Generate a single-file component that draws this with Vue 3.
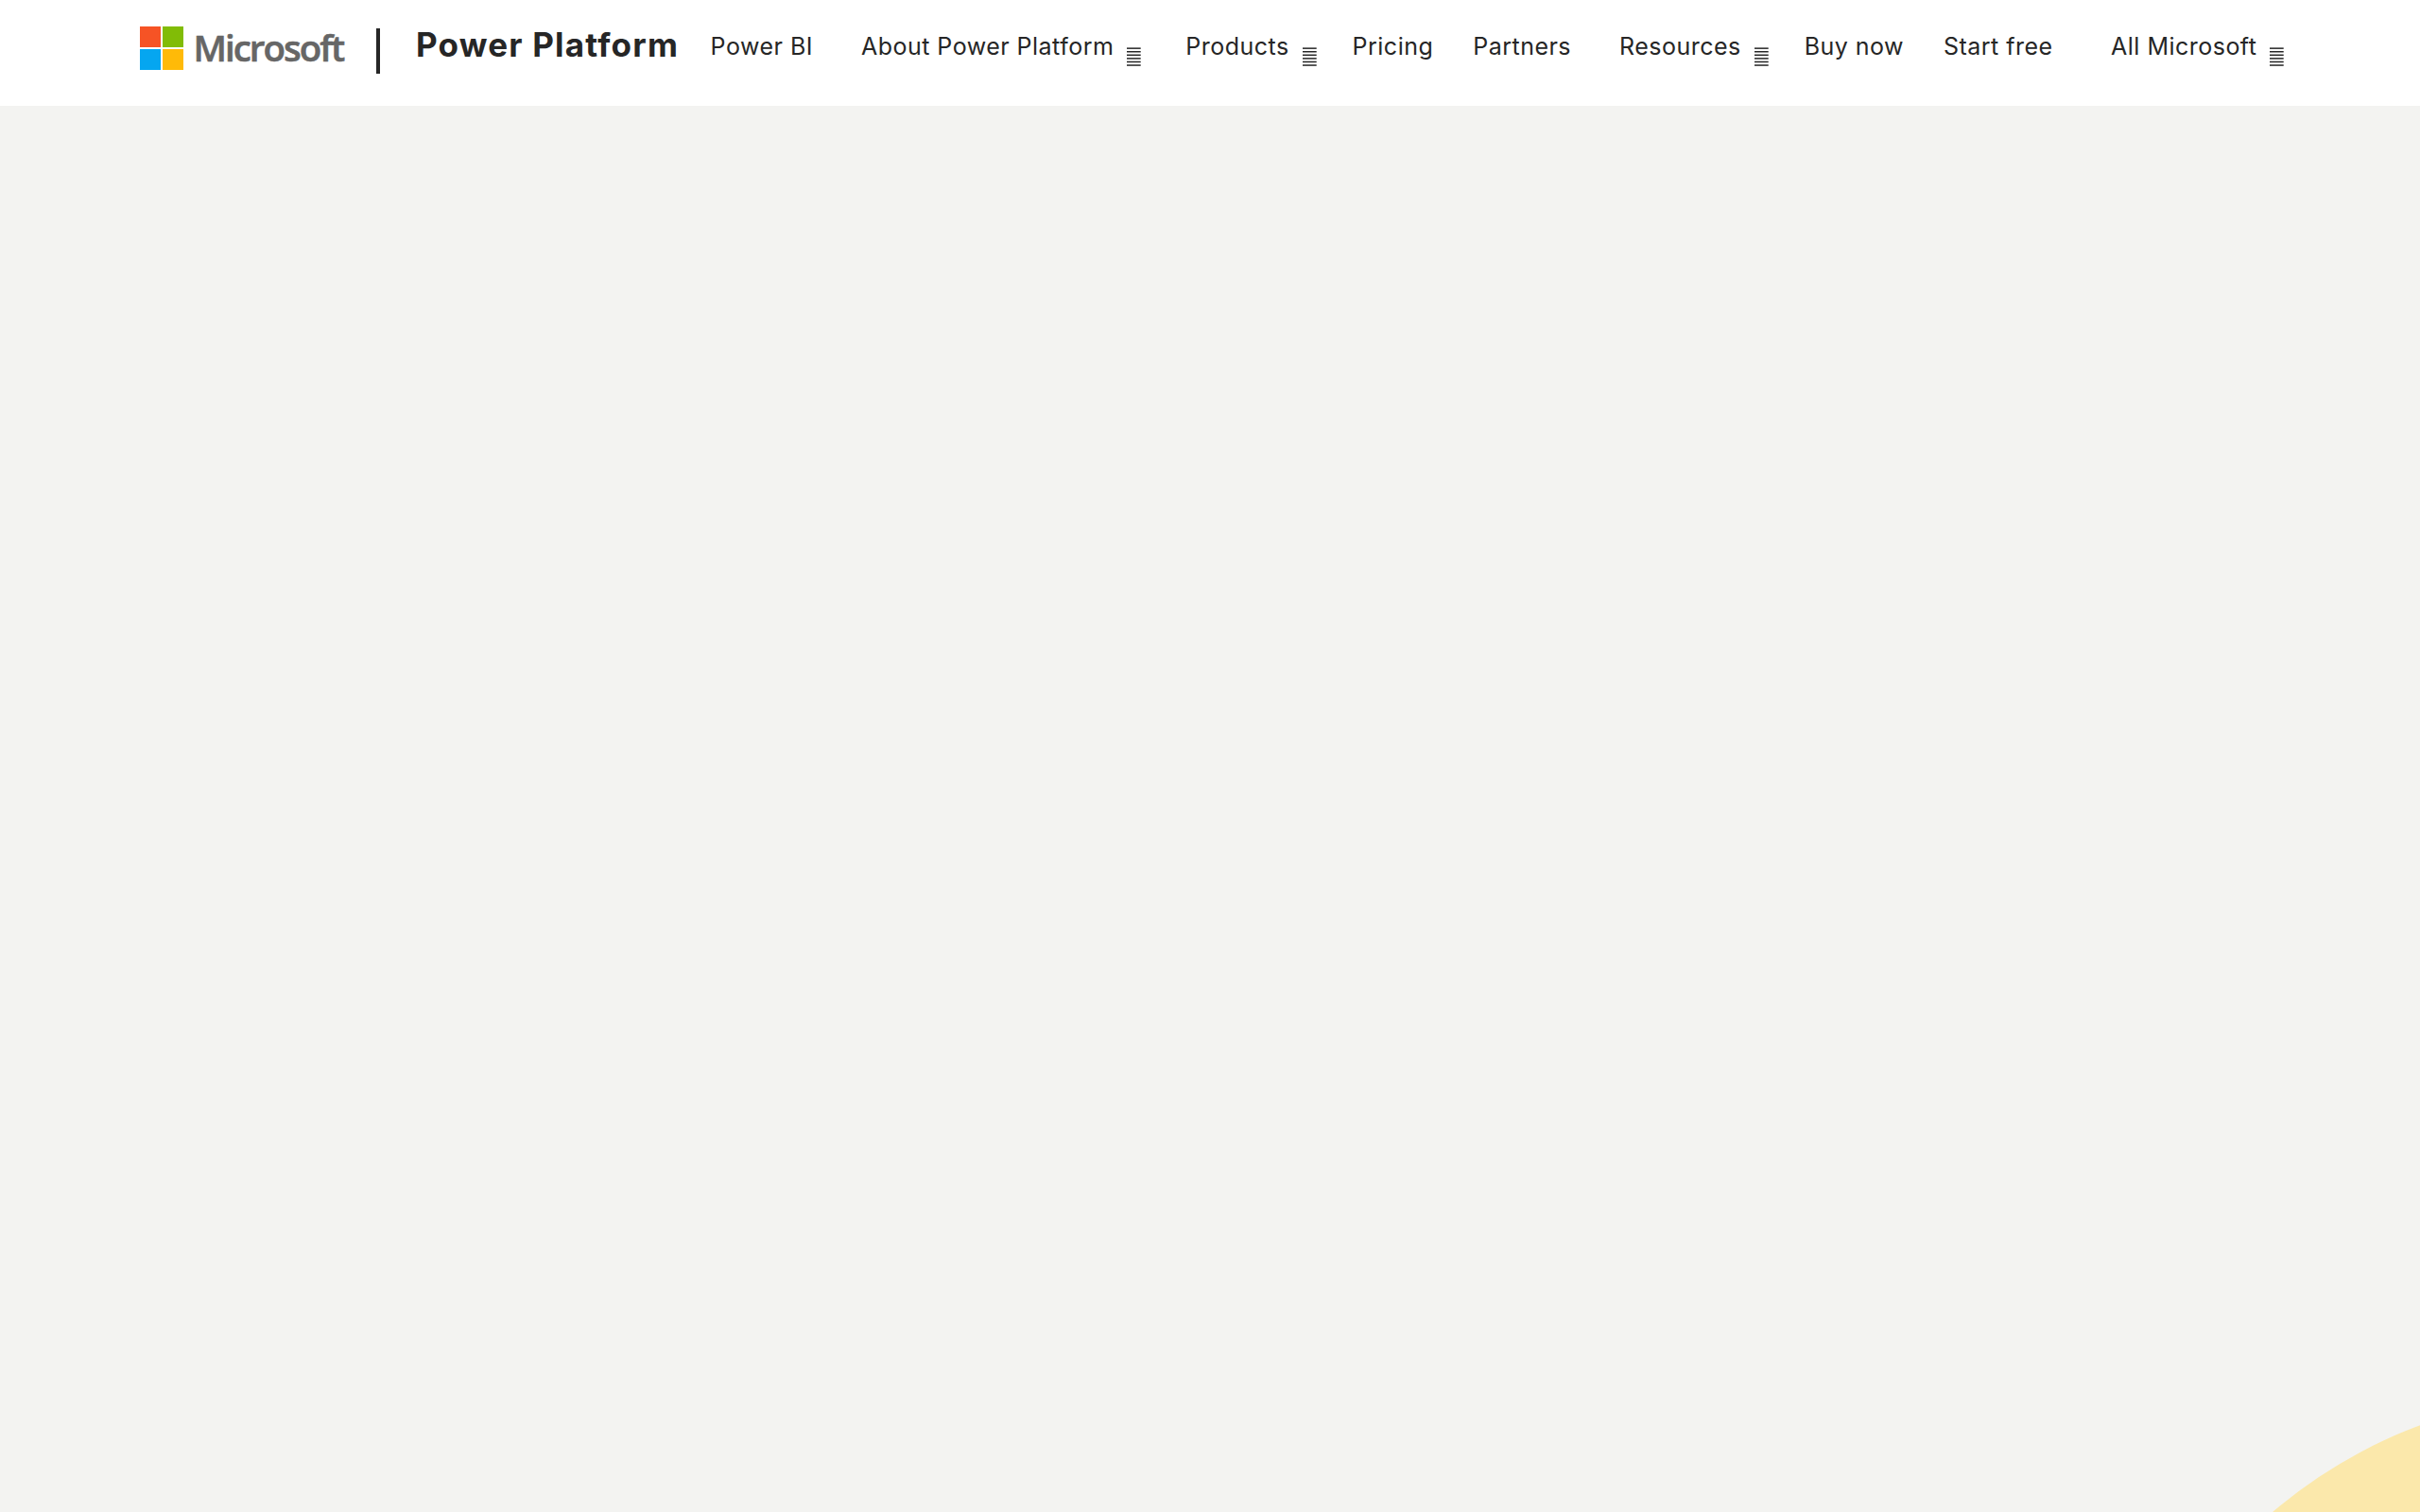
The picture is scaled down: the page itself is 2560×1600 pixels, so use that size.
<template>
  <div class="page">
    <header class="header">
      <a class="logo">
        <svg width="46" height="46" viewBox="0 0 46 46">
          <rect x="0" y="0" width="22" height="22" fill="#f65325" />
          <rect x="24" y="0" width="22" height="22" fill="#81bc06" />
          <rect x="0" y="24" width="22" height="22" fill="#05a6f0" />
          <rect x="24" y="24" width="22" height="22" fill="#ffba08" />
        </svg>
        <span class="logo-text">Microsoft</span>
      </a>
      <span class="divider"></span>
      <a class="brand">Power Platform</a>
      <nav class="nav">
        <a
          v-for="item in items"
          :key="item.label"
          class="nav-item"
          :class="{ 'has-menu': item.menu, last: item.last }"
        >
          <span>{{ item.label }}</span>
          <svg v-if="item.menu" class="menu-icon" width="15" height="20" viewBox="0 0 15 20">
            <rect v-for="n in 6" :key="n" x="0" :y="(n - 1) * 3.58 + 0.4" width="14.7" height="1.5" />
          </svg>
        </a>
      </nav>
    </header>
    <main class="hero">
      <!-- visible corner of the large yellow circle -->
      <svg width="200" height="120" viewBox="0 0 200 120">
        <circle cx="383" cy="517" r="522" fill="#fbe8ab" />
      </svg>
    </main>
  </div>
</template>

<script setup>
const items = [
  { label: 'Power BI' },
  { label: 'About Power Platform', menu: true },
  { label: 'Products', menu: true },
  { label: 'Pricing' },
  { label: 'Partners' },
  { label: 'Resources', menu: true },
  { label: 'Buy now' },
  { label: 'Start free' },
  { label: 'All Microsoft', menu: true, last: true }
];
</script>

<style>
body {
  margin: 0;
  overflow: hidden;
}
</style>

<style scoped>
.page {
  display: flex;
  flex-direction: column;
  width: 2560px;
  height: 1600px;
  background: #f3f3f1;
  color: #262626;
  font-family: Inter, sans-serif;
}

.header {
  display: flex;
  align-items: flex-start;
  box-sizing: border-box;
  height: 112px;
  padding: 20px 0 0 148px;
  background: #fff;
}

.logo {
  display: flex;
  gap: 10.5px;
  width: 226px;
}

.logo svg {
  margin-top: 8px;
}

.logo-text {
  font-family: 'Open Sans', sans-serif;
  font-size: 38.5px;
  font-weight: 600;
  line-height: 60px;
  letter-spacing: -2px;
  color: #666;
  -webkit-text-stroke: 0.6px #666;
}

.divider {
  width: 4px;
  height: 48px;
  margin: 10px 0 0 24px;
  background: #262626;
}

.brand {
  margin-left: 38px;
  font-size: 35px;
  font-weight: 700;
  line-height: 54px;
  letter-spacing: 1.2px;
  white-space: nowrap;
}

.nav {
  display: flex;
  margin-left: 12.5px;
}

.nav-item {
  display: flex;
  padding: 0 21px;
  font-size: 25px;
  line-height: 58px;
  letter-spacing: 0.48px;
  white-space: nowrap;
}

.nav-item.has-menu {
  padding: 0 17px 0 30px;
}

.nav-item.last {
  padding-left: 40.5px;
}

.menu-icon {
  margin: 30px 0 0 14px;
  fill: #262626;
}

.hero {
  display: flex;
  flex: 1;
  align-items: flex-end;
  justify-content: flex-end;
}
</style>
